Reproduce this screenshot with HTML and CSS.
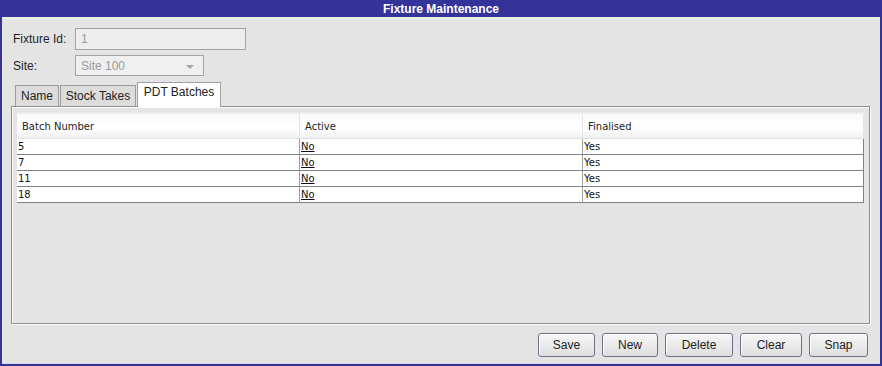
FILE: index.html
```html
<!DOCTYPE html>
<html>
<head>
<meta charset="utf-8">
<link rel="stylesheet" href="styles.css">
</head>
<body>
<div class="window">
  <div class="titlebar">Fixture Maintenance</div>
  <div class="content">
    <div class="form">
      <div class="row row-id">
        <label class="lbl">Fixture Id:</label>
        <div class="field field-id">1</div>
      </div>
      <div class="row row-site">
        <label class="lbl">Site:</label>
        <div class="field combo">Site 100<span class="arrow"></span></div>
      </div>
    </div>
    <div class="tabs">
      <div class="tab tab-name">Name</div>
      <div class="tab tab-stock">Stock Takes</div>
      <div class="tab active">PDT Batches</div>
    </div>
    <div class="panel">
      <table class="grid">
        <thead>
          <tr><th>Batch Number</th><th>Active</th><th>Finalised</th></tr>
        </thead>
        <tbody>
          <tr><td>5</td><td><u>No</u></td><td>Yes</td></tr>
          <tr><td>7</td><td><u>No</u></td><td>Yes</td></tr>
          <tr><td>11</td><td><u>No</u></td><td>Yes</td></tr>
          <tr><td>18</td><td><u>No</u></td><td>Yes</td></tr>
        </tbody>
      </table>
    </div>
    <div class="buttons">
      <button class="btn btn-save">Save</button>
      <button class="btn btn-new">New</button>
      <button class="btn btn-delete">Delete</button>
      <button class="btn btn-clear">Clear</button>
      <button class="btn btn-snap">Snap</button>
    </div>
  </div>
</div>
</body>
</html>
```

FILE: styles.css
```css
html, body {
  margin: 0;
  padding: 0;
  background: #e3e3e3;
}
body {
  font-family: "Liberation Sans", Arial, sans-serif;
  font-size: 12px;
  color: #1e1e1e;
}
.window {
  width: 882px;
  height: 366px;
  box-sizing: border-box;
  border: 2px solid #343494;
  border-top: none;
  background: #e4e4e4;
  display: flex;
  flex-direction: column;
}
.titlebar {
  height: 17px;
  line-height: 18px;
  background: #333399;
  color: #ffffff;
  font-weight: bold;
  font-size: 12px;
  text-align: center;
  margin: 0 -2px;
}
.content {
  flex: 1;
  display: flex;
  flex-direction: column;
  border-top: 2px solid #eaeee4;
  border-bottom: 1px solid #d8d8ec;
}
.form {
  padding: 9px 0 0 11px;
}
.row {
  display: flex;
  align-items: center;
}
.row-site {
  margin-top: 5px;
}
.lbl {
  width: 62px;
  color: #1e1e1e;
}
.field {
  box-sizing: border-box;
  border: 1px solid #a3a3a3;
  background: #eeeeee;
  color: #9a9a9a;
  padding-left: 5px;
  display: flex;
  align-items: center;
}
.field-id {
  width: 171px;
  height: 22px;
}
.combo {
  width: 129px;
  height: 21px;
  position: relative;
  background: #efefef;
}
.arrow {
  position: absolute;
  right: 9px;
  top: 9px;
  width: 0;
  height: 0;
  border-left: 4px solid transparent;
  border-right: 4px solid transparent;
  border-top: 4px solid #a6a6a6;
}
.tabs {
  display: flex;
  align-items: flex-end;
  margin: 6px 0 0 11px;
  height: 24px;
}
.tab {
  box-sizing: border-box;
  height: 21px;
  border: 1px solid #9a9a9a;
  border-bottom: none;
  background: #dcdcdc;
  padding: 0 5px;
  line-height: 21px;
  font-size: 12px;
  color: #222;
  margin-right: 1px;
  white-space: nowrap;
  text-align: center;
}
.tab-name {
  margin-left: 2px;
  width: 44px;
  padding: 0;
}
.tab-stock {
  width: 76px;
  padding: 0;
}
.tab.active {
  height: 25px;
  width: 84px;
  padding: 0;
  background: #ffffff;
  line-height: 19px;
  margin-right: 0;
  margin-bottom: -1px;
  position: relative;
  z-index: 1;
  border-color: #a0a0a0;
}
.panel {
  box-sizing: border-box;
  margin-left: 9px;
  width: 859px;
  height: 218px;
  border: 1px solid #8e8e8e;
  box-shadow: inset 1px 1px 0 #ffffff, 1px 1px 0 #ffffff;
  padding: 5px 5px 0 5px;
}
.grid {
  width: 847px;
  border-collapse: collapse;
  font-family: "DejaVu Sans", Tahoma, sans-serif;
  font-size: 10px;
  color: #111;
  table-layout: fixed;
}
.grid th {
  height: 24px;
  text-align: left;
  font-weight: normal;
  padding: 0 0 0 5px;
  background: linear-gradient(#fafafa, #ffffff 60%, #f0f0f0);
  border-right: 1px solid #e4e4e4;
  border-top: 2px solid #ececec;
  color: #222;
}
.grid th:nth-child(1) { width: 277px; }
.grid th:nth-child(2) { width: 277px; }
.grid td {
  height: 15px;
  padding: 0 0 0 1px;
  background: #ffffff;
  border-bottom: 1px solid #808080;
  border-right: 1px solid #a0a0a0;
  line-height: 15px;
}
.grid tbody tr:first-child td {
  border-top: 1px solid #e0e0e0;
}
.grid td:last-child {
  border-right: 1px solid #808080;
}
.grid u {
  text-underline-offset: 1px;
}
.buttons {
  display: flex;
  justify-content: flex-end;
  gap: 7px;
  margin-top: 9px;
  padding-right: 12px;
}
.btn {
  box-sizing: border-box;
  height: 24px;
  border: 1px solid #6f6f8c;
  border-radius: 3px;
  background: linear-gradient(#f6f6f6, #e6e6e6 70%, #dcdcdc);
  box-shadow: inset 1px 1px 0 #ffffff;
  font-family: "Liberation Sans", Arial, sans-serif;
  font-size: 12px;
  color: #222;
  padding: 0;
}
.btn-save { width: 57px; }
.btn-new { width: 56px; }
.btn-delete { width: 68px; }
.btn-clear { width: 62px; }
.btn-snap { width: 59px; }
```
